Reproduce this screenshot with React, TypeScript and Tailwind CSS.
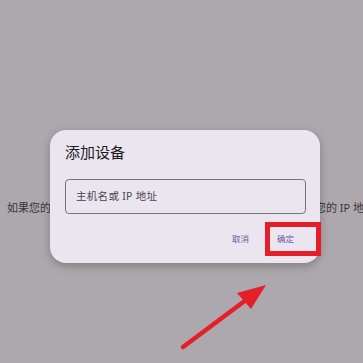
export default function App() {
  return (
    <div
      className="relative w-[363px] h-[363px] overflow-hidden bg-[#aca8ad]"
      style={{ fontFamily: '"Noto Sans", "Noto Sans CJK SC", sans-serif' }}
    >
      {/* background page text, dimmed by the scrim */}
      <div className="pt-[200px] pl-[7px] whitespace-nowrap text-[11px] leading-[16px] text-[#38353b]">
        如果您的设备没有自动显示，请点击右上角的按钮，并手动输入您的 IP 地址
      </div>

      {/* dialog */}
      <div className="absolute left-[50px] top-[130px] w-[270px] h-[133px] rounded-[16px] bg-[#ebe5ef] shadow-[0_3px_8px_rgba(0,0,0,0.25)] pt-[12px] px-[15px] pr-[14px]">
        <div className="text-[15px] leading-[20px] text-[#1d1b20]">添加设备</div>
        <div className="mt-[17px] h-[35px] rounded-[4px] border border-[#79747e] flex items-center pl-[10px] text-[10.5px] tracking-[0.3px] text-[#49454f]">
          主机名或 IP 地址
        </div>
        <div className="mt-[19px] flex justify-end gap-[28px] pr-[12px] text-[8.5px] leading-[12px] text-[#6a5aa6]">
          <span>取消</span>
          <span>确定</span>
        </div>
        <div className="absolute left-[215px] top-[92px] w-[56px] h-[34px] border-[5px] border-[#e61e2a]" />
      </div>

      {/* annotation arrow */}
      <svg className="absolute left-0 top-0" width="363" height="363" viewBox="0 0 363 363">
        <line x1="183" y1="347" x2="250" y2="297" stroke="#e61e2a" strokeWidth="4.5" strokeLinecap="round" />
        <polygon points="266,285 237,293 251,309" fill="#e61e2a" />
      </svg>
    </div>
  );
}
